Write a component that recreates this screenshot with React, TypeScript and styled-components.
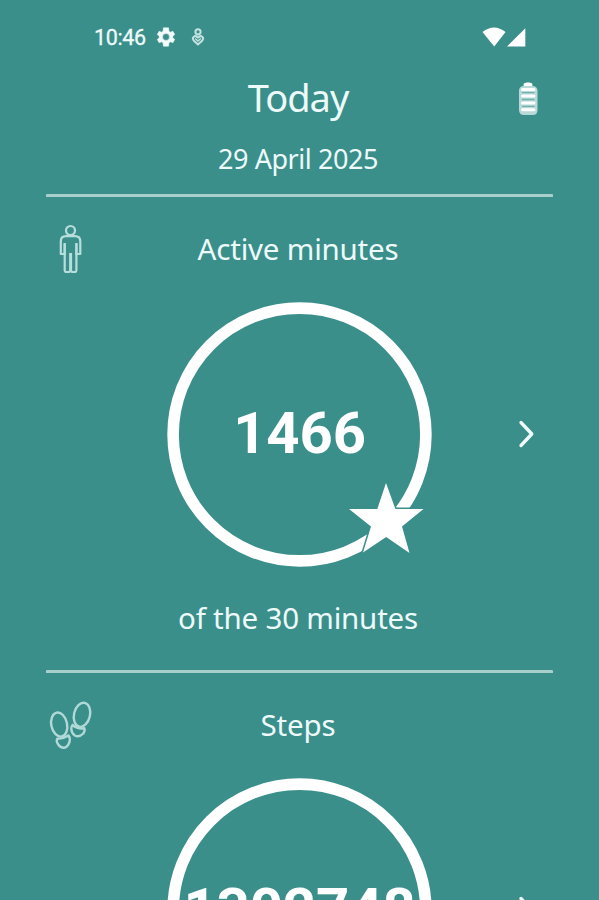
import React from "react";
import styled, { createGlobalStyle } from "styled-components";

const BG = "#3a8f8b";

const GlobalStyle = createGlobalStyle`
  html, body { margin: 0; padding: 0; background: ${BG}; overflow: hidden; }
  *, *::before, *::after { box-sizing: border-box; }
`;

const Screen = styled.main`
  width: 599px;
  height: 900px;
  overflow: hidden;
  background: ${BG};
  color: #eefafa;
  font-family: "Noto Sans", sans-serif;
`;

const StatusBar = styled.div`
  display: flex;
  align-items: center;
  height: 74px;
  padding: 0 73px 0 94px;
  font: 500 22px/24px Roboto, sans-serif;
`;

const Clock = styled.span`
  width: 52px;
  padding-top: 2px;
  font-weight: 400;
  font-size: 21.5px;
  letter-spacing: -0.35px;
  white-space: nowrap;
  -webkit-text-stroke: 0.3px #eefafa;
`;

const StatusIcon = styled.svg<{ $gap: number }>`
  display: block;
  flex: none;
  margin-left: ${(p) => p.$gap}px;
`;

const Spacer = styled.div`
  flex: 1;
`;

const Header = styled.header`
  display: grid;
  grid-template-columns: 60px 1fr 60px;
  height: 120px;
  margin: 0 46px;
`;

const Titles = styled.div`
  text-align: center;
`;

const Title = styled.h1`
  margin: 0 3px 0 0;
  font-size: 38px;
  font-weight: 400;
  line-height: 47px;
  letter-spacing: -1px;
`;

const DateText = styled.div`
  margin-top: 22px;
  margin-right: 3px;
  font-size: 27px;
  line-height: 32px;
  letter-spacing: -0.45px;
`;

const BatteryIcon = styled.svg`
  margin: 7px 0 0 17px;
  display: block;
`;

const Section = styled.section`
  height: 476px;
  margin: 0 46px;
  border-top: 3px solid #a9cfcd;
  border-radius: 1px;
`;

const SectionHead = styled.div`
  display: grid;
  grid-template-columns: 60px 1fr 60px;
  height: 105px;
  padding-top: 27px;
`;

const Heading = styled.h2`
  margin: 5px 3px 0 0;
  text-align: center;
  font-size: 29.5px;
  font-weight: 400;
  line-height: 40px;
  letter-spacing: -0.2px;
  white-space: nowrap;
`;

const Dial = styled.div`
  display: grid;
  grid-template-columns: 121px 265px 1fr;
  align-items: center;
`;

const RingBox = styled.div`
  grid-column: 2;
  display: grid;
  place-items: center;
  height: 265px;
  & > * { grid-area: 1 / 1; }
`;

const Value = styled.div`
  padding-bottom: 4px;
  color: #fff;
  font: 700 58px/68px Roboto, sans-serif;
  letter-spacing: -0.1px;
`;

const Chevron = styled.svg`
  margin: 0 0 2px 84px;
  display: block;
`;

const Goal = styled.div`
  margin: 31px 3px 0 0;
  text-align: center;
  font-size: 29.5px;
  line-height: 40px;
  letter-spacing: -0.2px;
`;

const STAR =
  "M219 181 L228.4 207 L256.5 207 L235 224.5 L242.5 251 L219.2 235 L196 250.5 L204 224.5 L182 207 L210.3 207 Z";

function Ring({ star }: { star?: boolean }) {
  return (
    <svg width="265" height="265" viewBox="0 0 265 265">
      <circle cx="132.5" cy="132.5" r="126.4" fill="none" stroke="#fff" strokeWidth="11.6" />
      {star && <path d={STAR} fill="#fff" stroke={BG} strokeWidth="3" paintOrder="stroke" />}
    </svg>
  );
}

function PersonIcon() {
  return (
    <svg width="50" height="50" viewBox="0 0 50 50" fill="none" stroke="#b7dedd" strokeWidth="2.2" strokeLinejoin="round">
      <circle cx="24.5" cy="6.5" r="4.5" />
      <path d="M20 12.2H29C32.5 12.2 34.3 14 34.3 17.3V30H30.4V19.5M30.4 29V46Q30.4 48 28.6 48H26.8Q25 48 25 46V29M24.2 29V46Q24.2 48 22.4 48H20.5Q18.7 48 18.7 46V29M18.7 19.5V30H14.8V17.3C14.8 14 16.6 12.2 20 12.2" />
      <path d="M18.7 19V31M30.4 19V31" />
    </svg>
  );
}

function FeetIcon() {
  return (
    <svg width="50" height="50" viewBox="0 0 50 50" fill="none" stroke="#b0d9d7" strokeWidth="2.4">
      <ellipse cx="13.2" cy="24.6" rx="7.9" ry="12.2" transform="rotate(-12 13.2 24.6)" />
      <ellipse cx="36" cy="14.8" rx="8" ry="12.2" transform="rotate(13 36 14.8)" />
      <path d="M11.3 38.8Q17 39 22.5 35.5Q24.5 38 23.5 42Q21.5 47.8 17.5 47.8Q13 47.3 11 42.3Q10.3 40 11.3 38.8Z" />
      <path d="M26.5 25Q32 29.5 38.3 28.3Q39.3 30.5 37.3 33.5Q33 37.8 28.8 35.5Q25.5 33.3 25.3 29Q25.2 26.3 26.5 25Z" />
    </svg>
  );
}

function ChevronIcon() {
  return (
    <Chevron width="24" height="34" viewBox="0 0 24 34" fill="none" stroke="#f1fbfb" strokeWidth="3.3" strokeLinecap="round" strokeLinejoin="round">
      <path d="M5 5.5L15.8 17L5 28.5" />
    </Chevron>
  );
}

function Metric({ icon, title, value, goal, star }: {
  icon: React.ReactNode; title: string; value: string; goal?: string; star?: boolean;
}) {
  return (
    <Section>
      <SectionHead>
        {icon}
        <Heading>{title}</Heading>
      </SectionHead>
      <Dial>
        <RingBox>
          <Ring star={star} />
          <Value>{value}</Value>
        </RingBox>
        <ChevronIcon />
      </Dial>
      {goal && <Goal>{goal}</Goal>}
    </Section>
  );
}

export default function App() {
  return (
    <Screen>
      <GlobalStyle />
      <StatusBar>
        <Clock>10:46</Clock>
        <StatusIcon $gap={9} width="22" height="22" viewBox="0 0 24 24" fill="#f3fbfb" stroke="#f3fbfb" strokeWidth="0.6">
          <path fillRule="evenodd" d="M19.4 13a7 7 0 0 0 0-2l2.1-1.7-2-3.6-2.6 1a8 8 0 0 0-1.7-1L14.8 2H9.2l-.4 3.7a8 8 0 0 0-1.7 1l-2.6-1-2 3.6L4.6 11a7 7 0 0 0 0 2l-2.1 1.7 2 3.6 2.6-1a8 8 0 0 0 1.7 1l.4 3.7h5.6l.4-3.7a8 8 0 0 0 1.7-1l2.6 1 2-3.6ZM12 15.8a3.8 3.8 0 1 1 0-7.6 3.8 3.8 0 0 1 0 7.6Z" />
        </StatusIcon>
        <StatusIcon $gap={14} width="14" height="20" viewBox="0 0 14 20" fill="none" stroke="#c4e2e0" strokeWidth="2">
          <circle cx="7" cy="4.8" r="2.6" />
          <path d="M7 17.5L2.7 13.5C.5 10.3 3.7 7.5 7 10.5C10.3 7.5 13.5 10.3 11.3 13.5Z" />
          <path d="M4.2 11.5L7 14L9.8 11.5" strokeWidth="1.4" />
        </StatusIcon>
        <Spacer />
        <StatusIcon $gap={0} width="44" height="22" viewBox="0 0 44 22" fill="#fff">
          <path d="M.5 6Q12 -3 23.5 6L12.2 20.5Z" />
          <path d="M25 20.5L43.3 2.3V20.5Z" />
        </StatusIcon>
      </StatusBar>
      <Header>
        <span />
        <Titles>
          <Title>Today</Title>
          <DateText>29 April 2025</DateText>
        </Titles>
        <BatteryIcon width="43" height="36" viewBox="0 0 43 36">
          <path d="M14 3Q18 -1 22 3V4.5Q27.5 5.5 27.5 9.5V29Q27.5 34 23 34H14Q9 34 9 29V9.5Q9 5.5 14 4.5Z" fill="#b7d9d7" />
          <path d="M15 3.5H21M12.5 8.5H24M12.5 15H24M12.5 22H24M12.5 28.7H24" stroke="#fff" strokeWidth="3" strokeLinecap="round" />
          <path d="M12 11.7H24.5M12 18.5H24.5M12 25.4H24.5" stroke="#74b0ae" strokeWidth="1.3" />
        </BatteryIcon>
      </Header>
      <Metric icon={<PersonIcon />} title="Active minutes" value="1466" goal="of the 30 minutes" star />
      <Metric icon={<FeetIcon />} title="Steps" value="1302748" />
    </Screen>
  );
}
